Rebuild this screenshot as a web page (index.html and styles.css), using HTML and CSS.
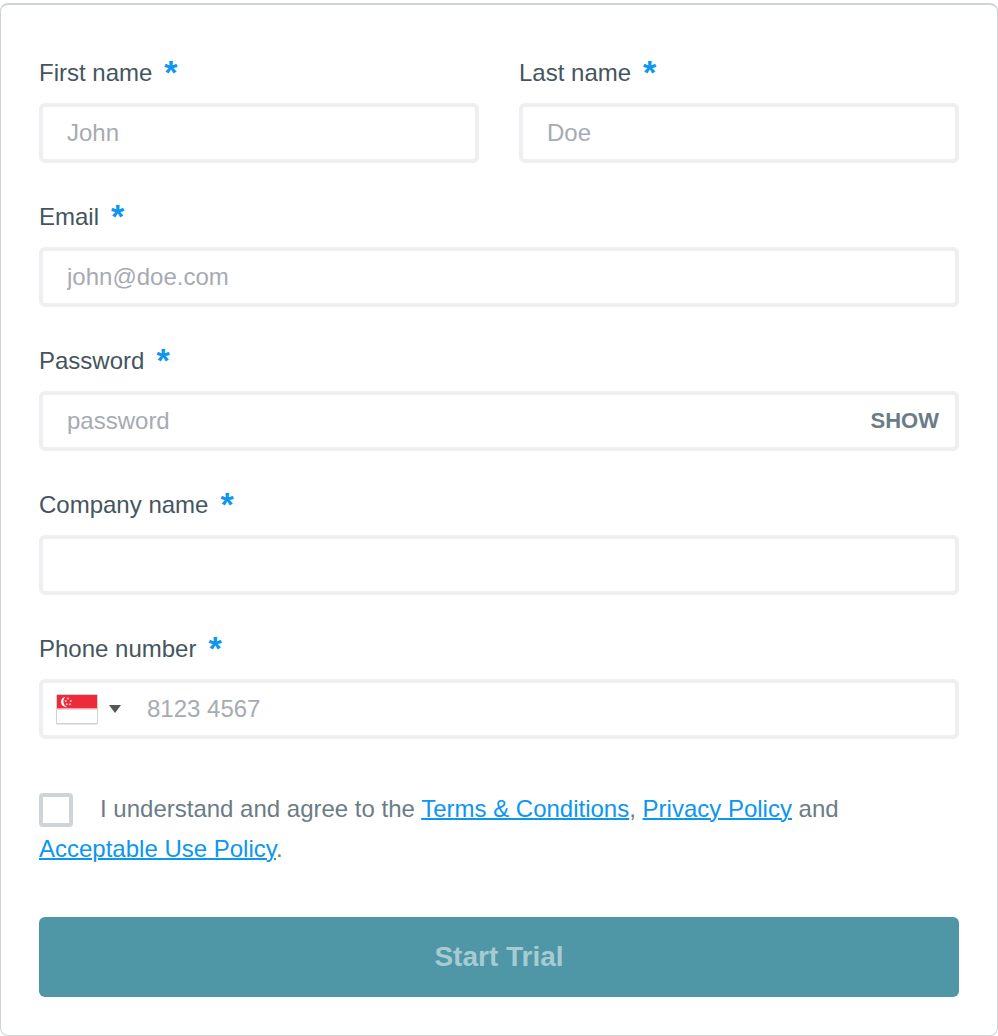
FILE: index.html
```html
<!DOCTYPE html>
<html lang="en">
<head>
<meta charset="utf-8">
<meta name="viewport" content="width=device-width, initial-scale=1">
<title>Start Trial</title>
<link rel="stylesheet" href="styles.css">
</head>
<body>
<form class="card">
  <div class="fields">
    <div class="row">
      <div class="field">
        <label class="label" for="first">First name <span class="required">*</span></label>
        <input class="input" id="first" type="text" placeholder="John">
      </div>
      <div class="field">
        <label class="label" for="last">Last name <span class="required">*</span></label>
        <input class="input" id="last" type="text" placeholder="Doe">
      </div>
    </div>
    <div class="field">
      <label class="label" for="email">Email <span class="required">*</span></label>
      <input class="input" id="email" type="email" placeholder="john@doe.com">
    </div>
    <div class="field">
      <label class="label" for="password">Password <span class="required">*</span></label>
      <div class="input group">
        <input class="bare" id="password" type="password" placeholder="password">
        <button class="show" type="button">SHOW</button>
      </div>
    </div>
    <div class="field">
      <label class="label" for="company">Company name <span class="required">*</span></label>
      <input class="input" id="company" type="text">
    </div>
    <div class="field">
      <label class="label" for="phone">Phone number <span class="required">*</span></label>
      <div class="input group phone">
        <button class="country" type="button" aria-label="Country: Singapore">
          <svg class="flag" viewBox="0 0 44 32" aria-hidden="true">
            <rect x="1" y="1" width="42" height="30.5" rx="1.5" fill="#d2d2d2"/>
            <rect x="2" y="2" width="40" height="28" fill="#fff"/>
            <rect x="2" y="2" width="40" height="14" fill="#ee2a3a"/>
            <rect x="2" y="15" width="40" height="1.5" fill="#f7a6ad"/>
            <path d="M10.5 3.8a5 5 0 1 0 1.5 10.3a6.2 6.2 0 0 1-1.5-10.3z" fill="#fff"/>
            <g fill="#fac4c8"><circle cx="13" cy="5.4" r="1"/><circle cx="10.7" cy="8" r="1"/><circle cx="15.8" cy="8" r="1"/><circle cx="11.8" cy="11.3" r="1"/><circle cx="15" cy="11.3" r="1"/></g>
          </svg>
          <svg class="arrow" viewBox="0 0 12 8" aria-hidden="true"><path d="M0 0h12L6 8z" fill="#555"/></svg>
        </button>
        <input class="bare" id="phone" type="tel" placeholder="8123 4567">
      </div>
    </div>
  </div>
  <div class="terms">
    <input class="check" id="agree" type="checkbox"><label for="agree">I understand and agree to the <a href="#terms">Terms &amp; Conditions</a>, <a href="#privacy">Privacy Policy</a> and <a href="#use">Acceptable Use Policy</a>.</label>
  </div>
  <button class="submit" type="submit" disabled>Start Trial</button>
</form>
</body>
</html>
```
FILE: styles.css
```css
* {
  box-sizing: border-box;
}

body {
  margin: 3px 0 0;
  background: #fff;
  font: 24px/40px "Liberation Sans", Arial, sans-serif;
  color: #6b7c86;
}

button,
input {
  margin: 0;
  font: inherit;
}

.card {
  padding: 48px 38px 38px;
  border: 1px solid #cfd4d8;
  border-top-width: 2px;
  border-radius: 8px;
}

.fields {
  display: flex;
  flex-direction: column;
  gap: 34px;
}

.row {
  display: grid;
  grid-template-columns: 1fr 1fr;
  gap: 40px;
}

.field {
  display: flex;
  flex-direction: column;
  gap: 10px;
  min-width: 0;
}

.label {
  display: flex;
  gap: 12px;
  height: 40px;
  color: #455560;
}

.required {
  font-size: 34px;
  font-weight: bold;
  line-height: 38px;
  color: #0c96f0;
}

.input {
  width: 100%;
  height: 60px;
  padding: 0 24px;
  border: 4px solid #edeff1;
  border-radius: 6px;
  background: #fff;
  color: #455560;
}

.group {
  display: flex;
  align-items: center;
  padding-right: 16px;
}

.bare {
  flex: 1;
  min-width: 0;
  height: 100%;
  padding: 0;
  border: 0;
  background: none;
  color: #455560;
}

::placeholder {
  color: #a6abb3;
  opacity: 1;
}

.show {
  padding: 0;
  border: 0;
  background: none;
  font-size: 22px;
  font-weight: bold;
  color: #6b7c86;
}

.phone {
  gap: 26px;
  padding-left: 12px;
}

.country {
  display: flex;
  align-items: center;
  gap: 10px;
  padding: 0;
  border: 0;
  background: none;
}

.flag {
  width: 44px;
  height: 32px;
}

.arrow {
  width: 12px;
  height: 8px;
}

.terms {
  margin: 50px 0 48px;
}

.check {
  appearance: none;
  width: 34px;
  height: 34px;
  margin-right: 27px;
  border: 4px solid #cfd4d8;
  border-radius: 4px;
  background: #fff;
  vertical-align: -10px;
}

.terms a {
  color: #0c96f0;
  text-decoration-thickness: 2px;
}

.submit {
  display: block;
  width: 100%;
  height: 80px;
  border: 0;
  border-radius: 6px;
  background: #4f96a6;
  font-size: 28px;
  font-weight: bold;
  color: #a7cbd3;
}
```
